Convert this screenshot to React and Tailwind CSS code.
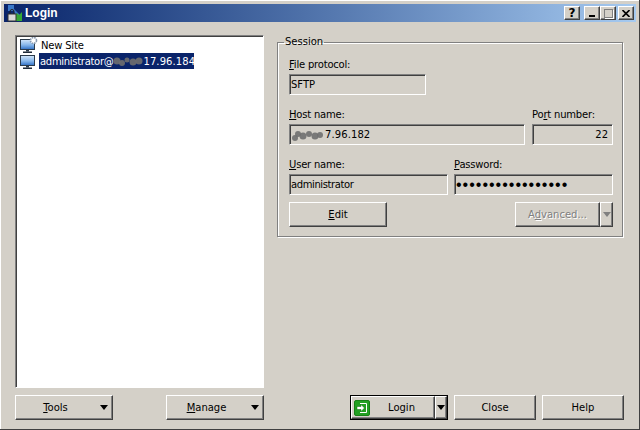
const raised =
  "border border-t-white border-l-white border-r-[#404040] border-b-[#404040] shadow-[inset_-1px_-1px_0_#808080] bg-[#d4d0c8]";
const sunken =
  "border border-t-[#808080] border-l-[#808080] border-r-white border-b-white shadow-[inset_1px_1px_0_#404040] bg-[#d4d0c8]";

function Monitor({ gear }) {
  return (
    <svg width="18" height="16" viewBox="0 0 18 16" className="shrink-0">
      <defs>
        <linearGradient id="scr" x1="0" y1="0" x2="0" y2="1">
          <stop offset="0" stopColor="#d6e8fa" />
          <stop offset="0.55" stopColor="#86b6ea" />
          <stop offset="1" stopColor="#2f6fc4" />
        </linearGradient>
      </defs>
      <rect x="0.5" y="2.5" width="14" height="10" fill="url(#scr)" stroke="#2a3a4a" />
      <rect x="6" y="13" width="3" height="1.5" fill="#2a3a4a" />
      <rect x="3" y="14.5" width="9" height="1.5" fill="#1f2a38" />
      {gear && (
        <g>
          <circle cx="13.5" cy="3.5" r="3" fill="#fff" stroke="#8a9bb0" strokeWidth="1.6" strokeDasharray="1.6 0.8" />
          <circle cx="13.5" cy="3.5" r="1.2" fill="#fff" />
        </g>
      )}
    </svg>
  );
}

function Smudge({ w, dots }) {
  return (
    <svg width={w} height="14" viewBox={`0 0 ${w} 14`} className="shrink-0">
      {dots.map(([x, y, r], i) => (
        <circle key={i} cx={x} cy={y} r={r} fill="#6f6f6f" opacity="0.9" />
      ))}
    </svg>
  );
}

function Field({ className, children }) {
  return (
    <div className={`${sunken} h-[21px] flex items-center pl-[1px] pr-[2px] ${className}`}>
      {children}
    </div>
  );
}

function Label({ children }) {
  return <div className="h-[14px] leading-[16px] mb-[3px] tracking-[-0.2px]">{children}</div>;
}

function Arrow({ color = "border-t-black" }) {
  return (
    <span
      className={`block w-0 h-0 border-x-[4.5px] border-x-transparent border-t-[5px] ${color}`}
    />
  );
}

function WinButton({ className, children }) {
  return (
    <div
      className={`${raised} w-[16px] h-[14px] flex items-center justify-center ${className}`}
    >
      {children}
    </div>
  );
}

export default function App() {
  return (
    <div
      className="w-[640px] h-[430px] flex flex-col p-[4px] bg-[#d4d0c8] text-black text-[10px] shadow-[inset_-1px_-1px_0_#404040,inset_1px_1px_0_#fff] overflow-hidden"
      style={{ fontFamily: '"DejaVu Sans", Verdana, sans-serif' }}
    >
      {/* title bar */}
      <div className="h-[18px] flex items-center bg-gradient-to-r from-[#0a246a] to-[#a6caf0] pl-[2px] pr-[2px]">
        <svg width="17" height="17" viewBox="0 0 17 17" className="shrink-0">
          <rect x="2" y="0" width="6" height="6" fill="#3a78c8" />
          <path d="M7 3 L14 10 L9 10 Z" fill="#3a78c8" />
          <path d="M9 16 L16 16 L16 7 L13 10 L11 8 L9 10 Z" fill="#35a835" />
          <rect x="2" y="9" width="8" height="7" fill="#d8d8d8" stroke="#333" strokeWidth="1" />
          <path d="M4 9 V6.5 a2 2 0 0 1 4 0 V9" fill="none" stroke="#222" />
        </svg>
        <span className="ml-[2px] font-bold text-white text-[12px] font-['Liberation_Sans']">Login</span>
        <div className="ml-auto flex items-center">
          <WinButton className="font-bold text-[12px] leading-none">?</WinButton>
          <WinButton className="ml-[4px] items-end pb-[2px]">
            <span className="block w-[6px] h-[2px] bg-black" />
          </WinButton>
          <WinButton>
            <span className="block w-[9px] h-[9px] border border-[#808080] shadow-[1px_1px_0_#fff]" />
          </WinButton>
          <WinButton className="ml-[2px]">
            <svg width="8" height="7" viewBox="0 0 8 7">
              <path d="M0.5 0 L7.5 7 M7.5 0 L0.5 7" stroke="#000" strokeWidth="1.6" />
            </svg>
          </WinButton>
        </div>
      </div>

      {/* main */}
      <div className="flex gap-[13px] pl-[11px] pt-[13px]">
        <div className={`w-[249px] h-[353px] shrink-0 border border-t-[#808080] border-l-[#808080] border-r-white border-b-white shadow-[inset_1px_1px_0_#404040] bg-white pl-[4px] pt-[1px]`}>
          <div className="flex items-center h-[16px]">
            <Monitor gear />
            <span className="ml-[2px] px-[1px] tracking-[-0.2px]">New Site</span>
          </div>
          <div className="flex items-center h-[16px]">
            <Monitor />
            <span className="ml-[1px] h-[16px] w-[155px] flex items-center pl-[1px] bg-[#0a246a] text-white whitespace-nowrap">
              <span className="tracking-[-0.3px]">administrator@</span>
              <Smudge w={30} dots={[[4, 7, 3.5], [9, 9, 3], [14, 6, 2.5], [20, 8, 3.5], [26, 7, 3.5]]} />
              <span className="tracking-[0.1px]">17.96.184</span>
            </span>
          </div>
        </div>

        <fieldset className="w-[346px] h-[202px] border border-[#808080] shadow-[inset_1px_1px_0_#fff,1px_1px_0_#fff] pl-[11px] pr-[9px] pt-[8px]">
          <legend className="-ml-[5px] px-[1px] h-[14px] leading-[14px]">Session</legend>

          <Label>
            <u>F</u>ile protocol:
          </Label>
          <Field className="w-[137px]">SFTP</Field>

          <div className="flex gap-[7px] mt-[12px]">
            <div>
              <Label>
                <u>H</u>ost name:
              </Label>
              <Field className="w-[236px]">
                <Smudge w={34} dots={[[4, 10, 3], [7, 6, 3], [12, 8, 3.5], [18, 6, 3], [24, 8, 3.5], [29, 7, 3]]} />
                <span className="tracking-[0.1px]">7.96.182</span>
              </Field>
            </div>
            <div>
              <Label>
                Po<u>r</u>t number:
              </Label>
              <Field className="w-[81px] justify-end pr-[4px]">22</Field>
            </div>
          </div>

          <div className="flex gap-[6px] mt-[12px]">
            <div>
              <Label>
                <u>U</u>ser name:
              </Label>
              <Field className="w-[159px] tracking-[-0.4px]">administrator</Field>
            </div>
            <div>
              <Label>
                <u>P</u>assword:
              </Label>
              <Field className="w-[159px] text-[16px] tracking-[1px] leading-none font-['Liberation_Sans']">•••••••••••••••••</Field>
            </div>
          </div>

          <div className="flex justify-between mt-[7px]">
            <div className={`${raised} w-[98px] h-[25px] flex items-center justify-center`}>
              <span>
                <u>E</u>dit
              </span>
            </div>
            <div className="flex">
              <div className={`${raised} w-[85px] h-[25px] flex items-center justify-center text-[#808080] [text-shadow:1px_1px_0_#fff]`}>
                <span>
                  A<u>d</u>vanced...
                </span>
              </div>
              <div className={`${raised} w-[13px] h-[25px] flex items-center justify-center`}>
                <Arrow color="border-t-[#808080]" />
              </div>
            </div>
          </div>
        </fieldset>
      </div>

      {/* bottom buttons */}
      <div className="flex mt-[7px] pl-[11px]">
        <div className={`${raised} relative w-[98px] h-[25px] flex items-center justify-center pr-[17px]`}>
          <span>
            <u>T</u>ools
          </span>
          <span className="absolute right-[4px] top-[9px]">
            <Arrow />
          </span>
        </div>
        <div className={`${raised} relative ml-[53px] w-[98px] h-[25px] flex items-center justify-center pr-[17px]`}>
          <span>
            <u>M</u>anage
          </span>
          <span className="absolute right-[4px] top-[9px]">
            <Arrow />
          </span>
        </div>

        <div className="ml-[86px] flex w-[98px] h-[25px] border border-black">
          <div className={`${raised} flex-1 flex items-center pl-[2px]`}>
            <svg width="16" height="16" viewBox="0 0 16 16" className="shrink-0">
              <rect x="0.5" y="0.5" width="15" height="15" rx="1.5" fill="#22a022" stroke="#178017" />
              <path d="M6 3.5 H12.5 V12.5 H6" fill="none" stroke="#fff" />
              <path d="M3 6.5 H7 V4.5 L10.5 8 L7 11.5 V9.5 H3 Z" fill="#fff" stroke="#0f6f0f" strokeWidth="0.5" />
            </svg>
            <span className="ml-[18px]">Login</span>
          </div>
          <div className={`${raised} w-[12px] flex items-center justify-center`}>
            <Arrow />
          </div>
        </div>
        <div className={`${raised} ml-[6px] w-[82px] h-[25px] flex items-center justify-center`}>
          Close
        </div>
        <div className={`${raised} ml-[6px] w-[82px] h-[25px] flex items-center justify-center`}>
          Help
        </div>
      </div>
    </div>
  );
}
